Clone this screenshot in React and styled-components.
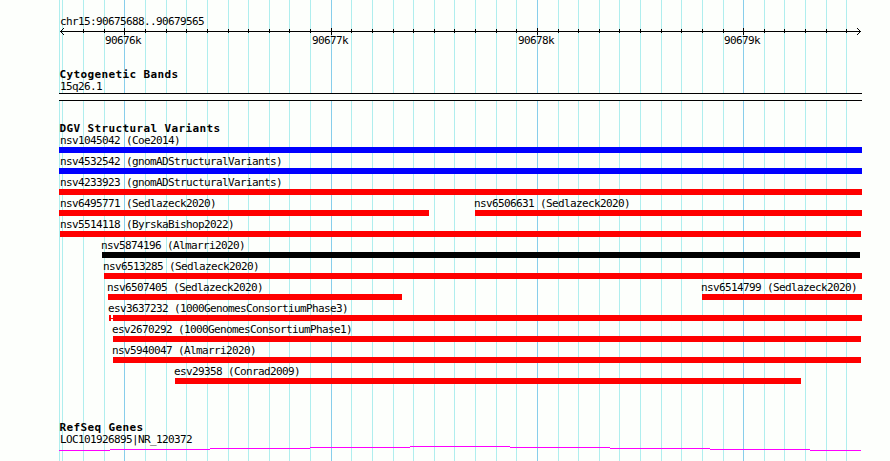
import styled, { createGlobalStyle } from 'styled-components';

const GlobalStyle = createGlobalStyle`
    body {
        margin: 0;
        background-color: #fdfffc;
    }
`;

const StyledBrowser = styled.main`
    position: relative;
    box-sizing: border-box;
    width: 890px;
    height: 461px;
    padding: 14px 28px 0 59px;
    overflow: hidden;
    color: #000;
    font-family: 'DejaVu Sans Mono', monospace;
    font-size: 11px;
    letter-spacing: -0.622px;
    white-space: pre;
`;

const GridLines = styled.svg`
    position: absolute;
    top: 0;
    left: 0;
    z-index: -1;
`;

const Ruler = styled.header`
    display: flex;
    flex-direction: column;
    height: 54px;
`;

const Label = styled.div`
    height: 15px;
    line-height: ${({ $line = 17 }) => $line}px;
    text-indent: ${({ $indent = 0 }) => $indent}px;
`;

const Axis = styled.svg`
    display: block;
    height: 7px;
    margin-top: -1px;
`;

const Scale = styled.div`
    display: flex;
    height: 12px;
    line-height: 12px;
`;

const ScaleLabel = styled.span`
    flex: none;
    width: 36px;
    margin-left: ${({ $gap }) => $gap}px;
`;

const Track = styled.section`
    height: ${({ $height }) => $height}px;
`;

const TrackTitle = styled.h2`
    margin: 0;
    height: 10px;
    line-height: 14px;
    font-size: 11px;
    font-weight: 700;
    letter-spacing: 0.378px;
    text-indent: 0.4px;
`;

const Band = styled.div`
    box-sizing: border-box;
    height: 8px;
    border: solid #000;
    border-width: 1px 0;
    background-color: #fdfffc;
`;

const Row = styled.div`
    display: flex;
    height: 21px;
`;

const Feature = styled.div`
    flex: none;
    width: ${({ $width }) => $width}px;
    margin-left: ${({ $gap }) => $gap}px;
`;

const Bar = styled.div`
    height: 6px;
    background-color: ${({ $color }) => $color};
`;

const SplitBar = styled.div`
    display: grid;
    grid-template-columns: 2px 2px 1fr;
    align-items: center;
    height: 6px;
`;

const Segment = styled.div`
    height: ${({ $thin }) => ($thin ? 1 : 6)}px;
    background-color: red;
`;

const Curve = styled.svg`
    display: block;
`;

const LEFT = 59;
const WIDTH = 803;

const edges = [59, 62];
const ticks = [
    83, 104, 124, 145, 166, 186, 207, 228, 248, 269, 289, 310, 331, 351, 372, 393, 413, 434, 454, 475,
    496, 516, 537, 558, 578, 599, 619, 640, 661, 681, 702, 723, 743, 764, 784, 805, 826, 846
];
const scale = [
    { x: 124, label: '90676k' },
    { x: 331, label: '90677k' },
    { x: 537, label: '90678k' },
    { x: 743, label: '90679k' }
];
const majors = scale.map(({ x }) => x);

const variants = [
    [{ name: 'nsv1045042 (Coe2014)', start: 59, end: 862, color: 'blue' }],
    [{ name: 'nsv4532542 (gnomADStructuralVariants)', start: 59, end: 862, color: 'blue' }],
    [{ name: 'nsv4233923 (gnomADStructuralVariants)', start: 59, end: 862 }],
    [
        { name: 'nsv6495771 (Sedlazeck2020)', start: 59, end: 429 },
        { name: 'nsv6506631 (Sedlazeck2020)', start: 475, end: 862 }
    ],
    [{ name: 'nsv5514118 (ByrskaBishop2022)', start: 60, end: 861 }],
    [{ name: 'nsv5874196 (Almarri2020)', start: 102, end: 860, color: 'black' }],
    [{ name: 'nsv6513285 (Sedlazeck2020)', start: 104, end: 862 }],
    [
        { name: 'nsv6507405 (Sedlazeck2020)', start: 108, end: 402 },
        { name: 'nsv6514799 (Sedlazeck2020)', start: 702, end: 862 }
    ],
    [{ name: 'esv3637232 (1000GenomesConsortiumPhase3)', start: 109, end: 862, split: true }],
    [{ name: 'esv2670292 (1000GenomesConsortiumPhase1)', start: 113, end: 861 }],
    [{ name: 'nsv5940047 (Almarri2020)', start: 113, end: 861 }],
    [{ name: 'esv29358 (Conrad2009)', start: 175, end: 801 }]
];

const VariantRow = ({ features }) => (
    <Row>
        {features.map(({ name, start, end, color = 'red', split }, i) => (
            <Feature key={name} $width={end - start} $gap={start - (i ? features[i - 1].end : LEFT)}>
                {/* labels start a pixel before the bar, but never left of x = 60 */}
                <Label $indent={Math.max(-1, 60 - start)}>{name}</Label>
                {split ? (
                    <SplitBar>
                        <Segment />
                        <Segment $thin />
                        <Segment />
                    </SplitBar>
                ) : (
                    <Bar $color={color} />
                )}
            </Feature>
        ))}
    </Row>
);

const App = () => {
    return (
        <StyledBrowser>
            <GlobalStyle />
            <GridLines width="890" height="461" shapeRendering="crispEdges">
                {[...edges, ...ticks].map(x => (
                    <rect key={x} x={x} width="1" height="461" fill={majors.includes(x) ? '#87ceeb' : '#afeeee'} />
                ))}
            </GridLines>

            <Ruler>
                <Label $indent={1} $line={15}>
                    chr15:90675688..90679565
                </Label>
                <Axis width={WIDTH} height="7" shapeRendering="crispEdges">
                    <rect x="1" y="3" width="801" height="1" />
                    {ticks.map(x =>
                        majors.includes(x) ? (
                            <rect key={x} x={x - LEFT} y="0" width="1" height="7" />
                        ) : (
                            <rect key={x} x={x - LEFT} y="1" width="1" height="4" />
                        )
                    )}
                    {[1, 2, 3].map(d => (
                        <g key={d}>
                            <rect x={1 + d} y={3 - d} width="1" height="1" />
                            <rect x={1 + d} y={3 + d} width="1" height="1" />
                            <rect x={801 - d} y={3 - d} width="1" height="1" />
                            <rect x={801 - d} y={3 + d} width="1" height="1" />
                        </g>
                    ))}
                </Axis>
                <Scale>
                    {scale.map(({ x, label }, i) => (
                        <ScaleLabel key={x} $gap={i ? x - scale[i - 1].x - 36 : x - LEFT - 19}>
                            {label}
                        </ScaleLabel>
                    ))}
                </Scale>
            </Ruler>

            <Track $height={54}>
                <TrackTitle>Cytogenetic Bands</TrackTitle>
                <Label $indent={1}>15q26.1</Label>
                <Band />
            </Track>

            <Track $height={299}>
                <TrackTitle>DGV Structural Variants</TrackTitle>
                {variants.map(features => (
                    <VariantRow key={features[0].name} features={features} />
                ))}
            </Track>

            <Track $height={40}>
                <TrackTitle>RefSeq Genes</TrackTitle>
                <Label $indent={1}>LOC101926895|NR_120372</Label>
                {/* Shallow gene arc, stepped one pixel at a time */}
                <Curve width={WIDTH} height="5" shapeRendering="crispEdges">
                    {[4, 3, 2, 1, 0, 1, 2, 3, 4].map((y, i) => {
                        const x = i ? i * 100 - 49 : 0;
                        const end = Math.min(i * 100 + 51, 802);
                        return <rect key={i} x={x} y={y} width={end - x} height="1" fill="magenta" />;
                    })}
                </Curve>
            </Track>
        </StyledBrowser>
    );
};

export default App;
